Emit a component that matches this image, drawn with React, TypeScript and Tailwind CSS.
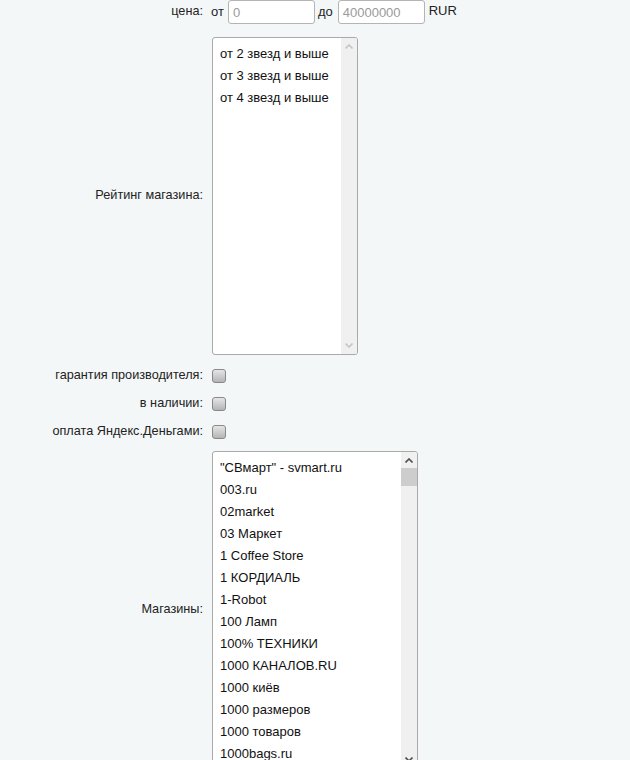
const ratings = ["от 2 звезд и выше", "от 3 звезд и выше", "от 4 звезд и выше"];

const shops = [
  '"СВмарт" - svmart.ru',
  "003.ru",
  "02market",
  "03 Маркет",
  "1 Coffee Store",
  "1 КОРДИАЛЬ",
  "1-Robot",
  "100 Ламп",
  "100% ТЕХНИКИ",
  "1000 КАНАЛОВ.RU",
  "1000 киёв",
  "1000 размеров",
  "1000 товаров",
  "1000bags.ru",
];

const Arrow = ({ up, color }: { up?: boolean; color: string }) => (
  <svg width="8" height="5" viewBox="0 0 8 5" className="block">
    <polyline
      points={up ? "0.5,4.5 4,1 7.5,4.5" : "0.5,0.5 4,4 7.5,0.5"}
      fill="none"
      stroke={color}
      strokeWidth="1.6"
    />
  </svg>
);

const ListBox = ({
  items,
  width,
  active,
}: {
  items: string[];
  width: string;
  active?: boolean;
}) => (
  <div
    className={`flex h-[318px] ${width} overflow-hidden rounded-[3px] border border-[#a9a9a9] bg-white`}
  >
    <ul className="flex-1 overflow-hidden pt-[5px] pl-[7px] text-[13px] text-[#111]">
      {items.map((t) => (
        <li key={t} className="h-[22px] leading-[22px] whitespace-nowrap">
          {t}
        </li>
      ))}
    </ul>
    {/* полоса прокрутки */}
    <div className="flex w-[16px] flex-col items-center bg-[#f0f0f0]">
      <div className="flex h-[17px] items-center justify-center">
        <Arrow up color={active ? "#505050" : "#c6c6c6"} />
      </div>
      {active && <div className="mt-[-1px] h-[18px] w-[16px] bg-[#cdcdcd]" />}
      <div className="flex-1" />
      <div className="flex h-[17px] items-center justify-center">
        <Arrow color={active ? "#505050" : "#c6c6c6"} />
      </div>
    </div>
  </div>
);

const Check = () => (
  <span className="block h-[14px] w-[14px] rounded-[3px] border border-[#888] bg-gradient-to-b from-[#e6e6e6] to-[#b4b4b4]" />
);

const Row = ({
  label,
  children,
  className = "",
}: {
  label: string;
  children: React.ReactNode;
  className?: string;
}) => (
  <div className={`flex items-center ${className}`}>
    <div className="w-[204px] shrink-0 pr-[1px] text-right text-[12.7px]">{label}</div>
    <div className="ml-[8px] flex items-center">{children}</div>
  </div>
);

export default function App() {
  return (
    <div className="h-[760px] w-[630px] overflow-hidden bg-[#f4f7f8] font-['Liberation_Sans',Arial,sans-serif] text-[13px] text-[#222]">
      <div className="flex flex-col">
        <Row label="цена:" className="h-[24px]">
          <span className="-ml-[1px]">от</span>
          <input
            placeholder="0"
            className="ml-[4px] h-[24px] w-[87px] rounded-[3px] border border-[#b4b4b4] bg-white px-[4px] text-[13px] placeholder:text-[#9a9a9a] outline-none"
          />
          <span className="ml-[3px]">до</span>
          <input
            placeholder="40000000"
            className="ml-[5px] h-[24px] w-[87px] rounded-[3px] border border-[#b4b4b4] bg-white px-[4px] text-[13px] placeholder:text-[#9a9a9a] outline-none"
          />
          <span className="ml-[4px] self-start leading-[22px]">RUR</span>
        </Row>

        <Row label="Рейтинг магазина:" className="mt-[13px]">
          <ListBox items={ratings} width="w-[146px]" />
        </Row>

        <div className="mt-[7px]">
          <Row label="гарантия производителя:" className="h-[28px]">
            <Check />
          </Row>
          <Row label="в наличии:" className="h-[28px]">
            <Check />
          </Row>
          <Row label="оплата Яндекс.Деньгами:" className="h-[28px]">
            <Check />
          </Row>
        </div>

        <Row label="Магазины:" className="mt-[5px]">
          <ListBox items={shops} width="w-[206px]" active />
        </Row>
      </div>
    </div>
  );
}
